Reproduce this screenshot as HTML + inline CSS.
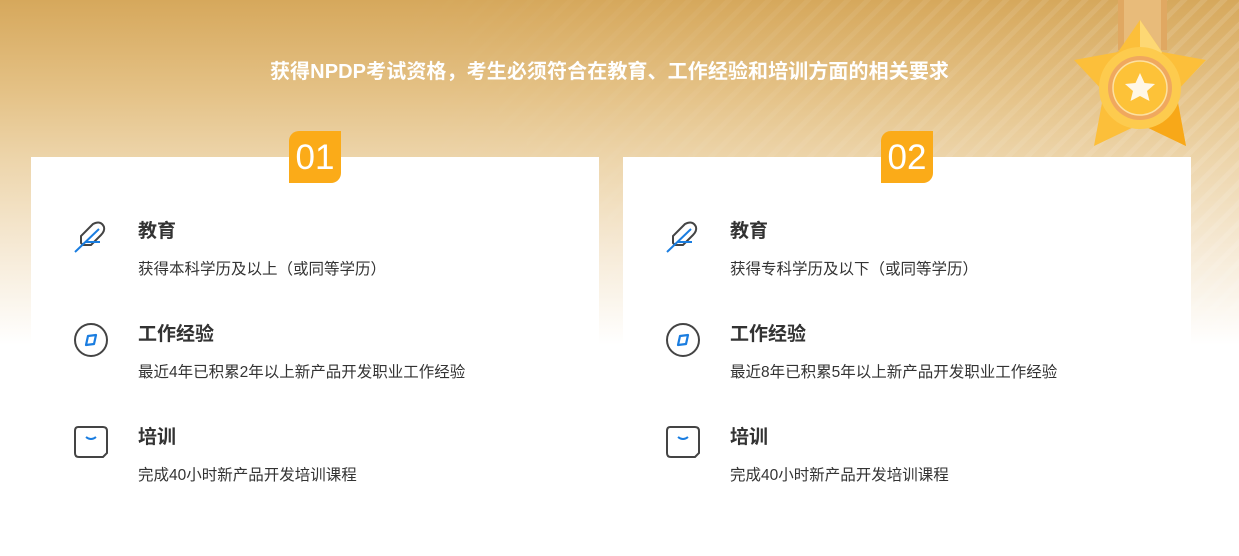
<!DOCTYPE html>
<html><head><meta charset="utf-8"><style>
*{margin:0;padding:0;box-sizing:border-box}
body{width:1239px;height:556px;overflow:hidden;position:relative;font-family:"Liberation Sans","Noto Sans CJK SC",sans-serif;
background:linear-gradient(180deg,#d6a85c 0px,#e4c185 90px,#edd5ab 160px,#f6ead6 250px,#fff 345px,#fff 556px);}
.stripes{position:absolute;left:0;top:0;width:1239px;height:345px;
background:repeating-linear-gradient(135deg,rgba(255,255,255,0) 0 9px,rgba(255,255,255,.12) 9px 14px);
-webkit-mask:linear-gradient(90deg,transparent 30%,#000 100%);}
h1{position:absolute;top:55px;left:0;width:1219px;text-align:center;color:#fff;font-size:20px;font-weight:bold;letter-spacing:0.1px}
.card{position:absolute;top:157px;width:568px;height:399px;background:#fff}
.badge{position:absolute;top:-26px;left:258px;width:52px;height:52px;background:#fbab18;color:#fff;font-size:35px;line-height:54px;text-align:center;border-radius:10px 0 10px 0;font-family:"Liberation Sans",sans-serif}
.row{position:absolute;left:42px}
.row svg{position:absolute;left:0;top:0}
.t{position:absolute;left:65px;top:0;font-size:19px;font-weight:bold;color:#333;white-space:nowrap;line-height:20px}
.d{position:absolute;left:65px;top:38px;font-size:15.5px;color:#333;white-space:nowrap;line-height:18px}
</style></head><body>
<div class="stripes"></div>
<h1>获得NPDP考试资格，考生必须符合在教育、工作经验和培训方面的相关要求</h1>
<svg style="position:absolute;left:1070px;top:0" width="140" height="150" viewBox="1070 0 140 150">
<rect x="1118" y="0" width="49" height="50" fill="#e0a862"/>
<rect x="1124" y="0" width="37" height="50" fill="#e8bb7a"/>
<polygon points="1140,20 1162,52 1206,60 1176,92 1186,146 1140,124 1094,146 1104,92 1074,60 1118,52" fill="#fcbf3a"/>
<polygon points="1140,20 1162,52 1140,88" fill="#fdd874"/>
<polygon points="1176,92 1186,146 1140,124 1140,88" fill="#f8a818"/>
<circle cx="1140" cy="88" r="41" fill="#fdcb4e"/>
<circle cx="1140" cy="88" r="32" fill="#f0a85e"/>
<circle cx="1140" cy="88" r="27" fill="#fdc238" stroke="#fde1a0" stroke-width="1.5"/>
<polygon points="1140,73 1144.5,83 1155,84 1147,91 1149.5,101 1140,96 1130.5,101 1133,91 1125,84 1135.5,83" fill="#fff7e6"/>
</svg>
<div class="card" style="left:31px">
 <div class="badge">01</div>
 <div class="row" style="top:62px"><svg width="36" height="36" viewBox="0 0 36 36"><path d="M8 24 L8 17 L20 5 Q28 1 31 8 Q32 12 28 16 L18 26 L10 26 Z" fill="none" stroke="#444" stroke-width="2"/><path d="M2 33 L26 10 M12 23 L27 23" stroke="#1a7de0" stroke-width="2" fill="none"/></svg></div>
 <div class="t" style="top:65px;left:107px">教育</div><div class="d" style="top:104px;left:107px">获得本科学历及以上（或同等学历）</div>
 <div class="row" style="top:165px"><svg width="36" height="36" viewBox="0 0 36 36"><circle cx="18" cy="18" r="16" fill="none" stroke="#444" stroke-width="2"/><polygon points="13,23 15,14 23,13 21,22" fill="none" stroke="#1a7de0" stroke-width="2.2" stroke-linejoin="round"/></svg></div>
 <div class="t" style="top:168px;left:107px">工作经验</div><div class="d" style="top:207px;left:107px">最近4年已积累2年以上新产品开发职业工作经验</div>
 <div class="row" style="top:268px"><svg width="36" height="36" viewBox="0 0 36 36"><path d="M5 2 L30 2 Q34 2 34 6 L34 28 L30 32 L6 32 Q2 32 2 28 L2 6 Q2 2 5 2" fill="none" stroke="#444" stroke-width="2"/><path d="M13 12 Q18 16 23 12" fill="none" stroke="#1a7de0" stroke-width="2"/></svg></div>
 <div class="t" style="top:271px;left:107px">培训</div><div class="d" style="top:310px;left:107px">完成40小时新产品开发培训课程</div>
</div>
<div class="card" style="left:623px">
 <div class="badge">02</div>
 <div class="row" style="top:62px"><svg width="36" height="36" viewBox="0 0 36 36"><path d="M8 24 L8 17 L20 5 Q28 1 31 8 Q32 12 28 16 L18 26 L10 26 Z" fill="none" stroke="#444" stroke-width="2"/><path d="M2 33 L26 10 M12 23 L27 23" stroke="#1a7de0" stroke-width="2" fill="none"/></svg></div>
 <div class="t" style="top:65px;left:107px">教育</div><div class="d" style="top:104px;left:107px">获得专科学历及以下（或同等学历）</div>
 <div class="row" style="top:165px"><svg width="36" height="36" viewBox="0 0 36 36"><circle cx="18" cy="18" r="16" fill="none" stroke="#444" stroke-width="2"/><polygon points="13,23 15,14 23,13 21,22" fill="none" stroke="#1a7de0" stroke-width="2.2" stroke-linejoin="round"/></svg></div>
 <div class="t" style="top:168px;left:107px">工作经验</div><div class="d" style="top:207px;left:107px">最近8年已积累5年以上新产品开发职业工作经验</div>
 <div class="row" style="top:268px"><svg width="36" height="36" viewBox="0 0 36 36"><path d="M5 2 L30 2 Q34 2 34 6 L34 28 L30 32 L6 32 Q2 32 2 28 L2 6 Q2 2 5 2" fill="none" stroke="#444" stroke-width="2"/><path d="M13 12 Q18 16 23 12" fill="none" stroke="#1a7de0" stroke-width="2"/></svg></div>
 <div class="t" style="top:271px;left:107px">培训</div><div class="d" style="top:310px;left:107px">完成40小时新产品开发培训课程</div>
</div>
</body></html>
